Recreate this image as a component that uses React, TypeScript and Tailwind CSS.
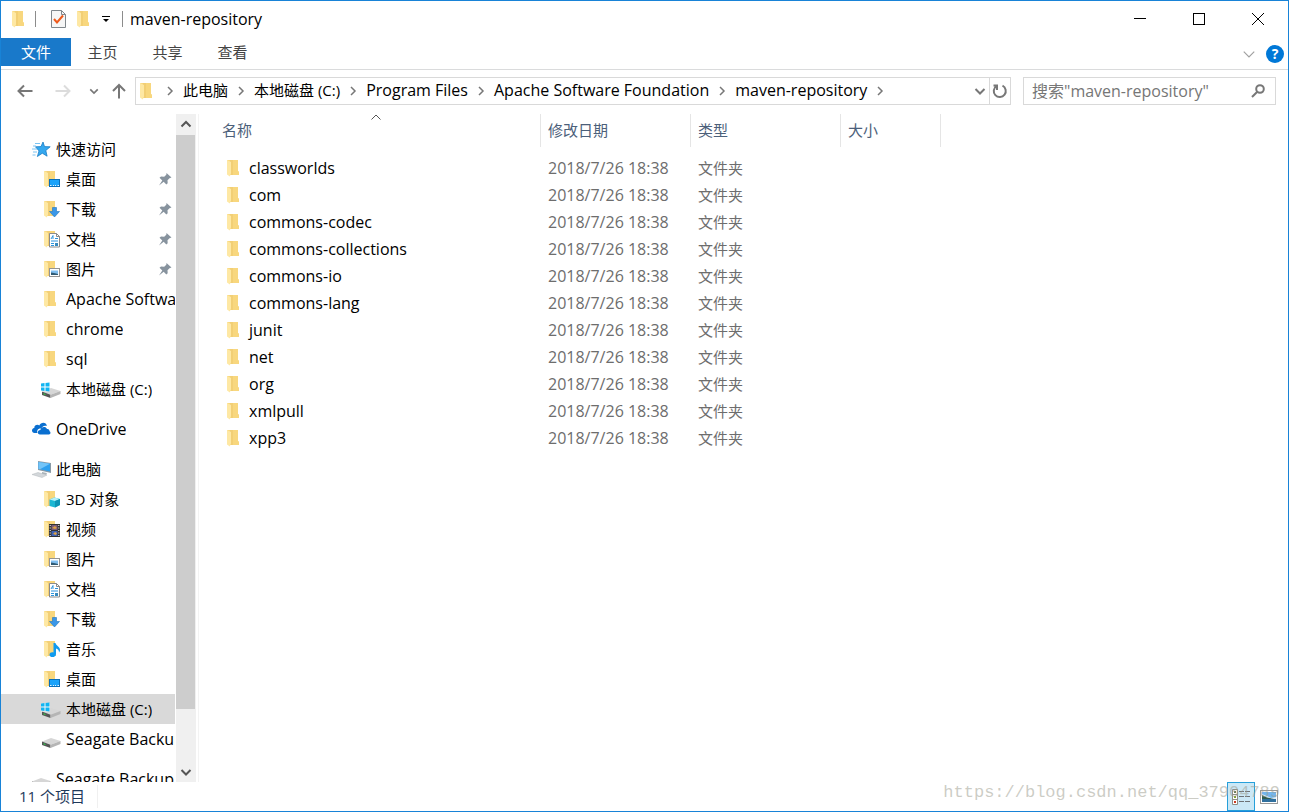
import type { ReactNode } from "react";

type IconName =
	| "star"
	| "folder"
	| "desktop"
	| "downloads"
	| "documents"
	| "pictures"
	| "objects"
	| "videos"
	| "music"
	| "system"
	| "drive"
	| "cloud"
	| "computer";

type TreeItem = { label: string; icon: IconName; pinned?: boolean; selected?: boolean };
type TreeGroup = { label: string; icon: IconName; items: TreeItem[] };

const groups: TreeGroup[] = [
	{
		label: "快速访问",
		icon: "star",
		items: [
			{ label: "桌面", icon: "desktop", pinned: true },
			{ label: "下载", icon: "downloads", pinned: true },
			{ label: "文档", icon: "documents", pinned: true },
			{ label: "图片", icon: "pictures", pinned: true },
			{ label: "Apache Software", icon: "folder" },
			{ label: "chrome", icon: "folder" },
			{ label: "sql", icon: "folder" },
			{ label: "本地磁盘 (C:)", icon: "system" },
		],
	},
	{ label: "OneDrive", icon: "cloud", items: [] },
	{
		label: "此电脑",
		icon: "computer",
		items: [
			{ label: "3D 对象", icon: "objects" },
			{ label: "视频", icon: "videos" },
			{ label: "图片", icon: "pictures" },
			{ label: "文档", icon: "documents" },
			{ label: "下载", icon: "downloads" },
			{ label: "音乐", icon: "music" },
			{ label: "桌面", icon: "desktop" },
			{ label: "本地磁盘 (C:)", icon: "system", selected: true },
			{ label: "Seagate Backup", icon: "drive" },
		],
	},
	{ label: "Seagate Backup", icon: "drive", items: [] },
];

const crumbs = [
	"此电脑",
	"本地磁盘 (C:)",
	"Program Files",
	"Apache Software Foundation",
	"maven-repository",
];

const files = [
	"classworlds",
	"com",
	"commons-codec",
	"commons-collections",
	"commons-io",
	"commons-lang",
	"junit",
	"net",
	"org",
	"xmlpull",
	"xpp3",
];

const columns = ["名称", "修改日期", "类型", "大小"];

// Latin labels are set a step larger than Chinese ones
function labelSize(label: string) {
	return /^[\x00-\x7f]+$/.test(label) ? "text-base" : "text-[15px]";
}

function Svg({ children }: { children: ReactNode }) {
	return (
		<svg viewBox="0 0 20 20" className="size-5 shrink-0" aria-hidden="true">
			{children}
		</svg>
	);
}

function FolderShape() {
	return (
		<>
			<path d="M3 2H14v11l1 .5V17H6z" fill="#f8d77e" />
			<path d="M6 2h3v15H6z" fill="#f2cf75" />
			<path d="M3 2l4 2v11.500L5.800 18.500 3 16.500z" fill="#fee8a4" />
		</>
	);
}

function DriveShape() {
	return (
		<>
			<path d="M1 12.500L10 9l9.500 3-10 3.800z" fill="#d6d6d6" />
			<path d="M1 12.500l8.500 3.300V19L1 16z" fill="#555" />
			<path d="M9.500 15.800l10-3.800v3l-10 4z" fill="#b5b5b5" />
			<path d="M2.500 14.800l2 .7" stroke="#2fd04a" strokeWidth="1.2" />
		</>
	);
}

function ItemIcon({ name }: { name: IconName }) {
	switch (name) {
		case "star":
			return (
				<Svg>
					<path
						d="M12 3l1.500 4.600 5.700.2-4.400 3.700 1.300 5.700-4.800-3-4.900 3.300 1.600-5.600L4.500 7.800l5.500-.2z"
						fill="#35a8ef"
						stroke="#1b7cc4"
						strokeWidth=".8"
					/>
					<path d="M4 4.500h5M2 7h3M1 10h5M2 13h4M1.500 16h3" stroke="#6bbcf0" strokeWidth=".9" />
				</Svg>
			);
		case "desktop":
			return (
				<Svg>
					<FolderShape />
					<rect x="8.5" y="10.5" width="10" height="7" fill="#1aa3fb" stroke="#0b6fb8" />
					<path d="M9 16.500h1.500M12 16.500h1M14 16.500h1M16.500 16.500h1.500" stroke="#e8f5ff" />
				</Svg>
			);
		case "downloads":
			return (
				<Svg>
					<FolderShape />
					<path d="M11.500 8.500h4v4h3L13.500 18l-5-5.500h3z" fill="#3a97e8" stroke="#2176bd" strokeWidth=".6" />
				</Svg>
			);
		case "documents":
			return (
				<Svg>
					<FolderShape />
					<path d="M8.500 4.500h7l3 3v10.500h-10z" fill="#fff" stroke="#8b8b8b" />
					<path d="M15.500 4.500v3h3" fill="none" stroke="#8b8b8b" />
					<path d="M10 10l2-3.500V10M14 9.500h3M10 12h7M10 14.500h3M10 16.500h3" fill="none" stroke="#2c94dd" />
					<path d="M14 14h3v3h-3z" fill="#378bc0" />
				</Svg>
			);
		case "pictures":
			return (
				<Svg>
					<FolderShape />
					<rect x="8.5" y="9.5" width="10" height="8" fill="#fff" stroke="#949494" />
					<path d="M10 11.500h7V16h-7z" fill="#81bff0" />
					<path d="M10 13.500l3 .5 4 1V16h-7z" fill="#315b73" />
				</Svg>
			);
		case "objects":
			return (
				<Svg>
					<FolderShape />
					<path d="M8.500 10.500l5-2 5.500 1.500v6l-5 2.500-5.500-1.500z" fill="#1bb7d3" />
					<path d="M8.500 10.500l5-2L19 10l-5 2z" fill="#b4f0fa" />
					<path d="M14 12l5-2v6l-5 2.500z" fill="#0d94b5" />
				</Svg>
			);
		case "videos":
			return (
				<Svg>
					<FolderShape />
					<path d="M8 5h11v13H8z" fill="#333" />
					<path d="M10.500 6h6v5h-6z" fill="#7b5c78" />
					<path d="M10.500 12h6v5h-6z" fill="#3e62b5" />
					<path d="M11 9l3-2 2 2-2 1zM12 15l2-2 2 1-1 2z" fill="#e0a142" />
					<path d="M9.200 6v12M17.800 6v12" stroke="#fff" strokeDasharray="1 1.500" />
				</Svg>
			);
		case "music":
			return (
				<Svg>
					<FolderShape />
					<path
						d="M12.500 4h2c.5 2.500 4.500 3.500 4.500 7 0 1.500-1 2.500-1 2.500.3-2.500-1.500-3.300-3-4V15c0 4-6.500 4-6.500.8 0-2 2-2.800 4-2.300z"
						fill="#0f9bf0"
					/>
				</Svg>
			);
		case "system":
			return (
				<Svg>
					<DriveShape />
					<path d="M0 4h9v8.500H0z" fill="#fff" fillOpacity=".7" />
					<path d="M0 4.500L3.500 4v3.500H0zM4.500 4L8.500 3.500v4h-4zM0 8.500h3.500V12L0 11.500zM4.500 8.500h4v4l-4-.4z" fill="#12b5f2" />
				</Svg>
			);
		case "drive":
			return (
				<Svg>
					<DriveShape />
				</Svg>
			);
		case "cloud":
			return (
				<Svg>
					<path
						d="M3.500 14C.500 14 0 9.500 3.300 9c-.2-3 3.500-4 5-2.500C10 2.500 15.500 3 15.800 7c-3-1-5 1-5.300 2.500C7 8.800 5.500 11.500 6.500 14z"
						fill="#0a6fd0"
					/>
					<path
						d="M9 15.500c-3 0-3-4.500.4-4.500.2-3.500 5.600-4.200 6.600-1 2-.3 2.700 1.500 2.500 2.300 1.500.7 1.200 3.200-.5 3.200z"
						fill="#0a6fd0"
					/>
				</Svg>
			);
		case "computer":
			return (
				<Svg>
					<path d="M7 2l13 2v10L7 11z" fill="#8a9aa6" />
					<path d="M7.500 3L19 4.800v7.700L7.500 10z" fill="#2d9fee" />
					<path d="M7.500 3L19 4.800 9 10.300l-1.500-.3z" fill="#72c4f8" />
					<path d="M11 13l5 1-1 2-4-1z" fill="#a9b2b8" />
					<path d="M1 15.500l6-2 9 2.500-5 2.500z" fill="#d3d7da" stroke="#b3b9bd" strokeWidth=".5" />
				</Svg>
			);
		default:
			return (
				<Svg>
					<FolderShape />
				</Svg>
			);
	}
}

function Pin() {
	return (
		<svg viewBox="0 0 14 14" className="size-3.5 shrink-0" aria-hidden="true">
			<path
				d="M8.500 1L13.500 5.500l-2 .8-2 1.900.2 3-1.400 1.200-2.600-2.700L1 13.500l3.300-5L1.500 5.800 3 4.500l3.200.2 2.100-2z"
				fill="#87939e"
			/>
		</svg>
	);
}

function Chevron({ direction, className }: { direction: "up" | "down" | "right"; className: string }) {
	const paths = {
		up: "M1.500 7.500L6 3l4.500 4.500",
		down: "M1.500 4L6 8.500 10.500 4",
		right: "M4 2l4 4-4 4",
	};
	return (
		<svg viewBox="0 0 12 12" className={`shrink-0 fill-none stroke-current ${className}`} aria-hidden="true">
			<path d={paths[direction]} />
		</svg>
	);
}

function TitleBar() {
	return (
		<header className="flex h-[37px] shrink-0 items-center pb-0.5 pl-2">
			<ItemIcon name="folder" />
			<span className="ml-1.5 h-4 w-px bg-[#8c8c8c]" />
			<button aria-label="属性" className="ml-3 size-5">
				<svg viewBox="0 0 20 20" className="size-5">
					<path d="M3.500 1.500h10l4 4v13h-14z" fill="#f6f6f6" stroke="#80878c" />
					<path d="M13.500 1.500v4h4" fill="none" stroke="#80878c" />
					<path d="M6 10l3 3.500 6-7" fill="none" stroke="#ee5a1c" strokeWidth="2" />
				</svg>
			</button>
			<button aria-label="新建文件夹" className="ml-1.5 size-5">
				<ItemIcon name="folder" />
			</button>
			<button aria-label="自定义快速访问工具栏" className="ml-1 p-1">
				<svg viewBox="0 0 8 8" className="size-2">
					<path d="M0 1.500h8" stroke="#000" />
					<path d="M1 4h6L4 7z" />
				</svg>
			</button>
			<span className="ml-2 h-4 w-px bg-[#8c8c8c]" />
			<h1 className="ml-[7px] text-base">maven-repository</h1>
			<div className="mr-px ml-auto flex h-full">
				<button aria-label="最小化" className="flex w-[59px] items-center justify-center">
					<span className="h-px w-3 bg-black" />
				</button>
				<button aria-label="最大化" className="flex w-[59px] items-center justify-center">
					<span className="size-3 border border-black" />
				</button>
				<button aria-label="关闭" className="flex w-[59px] items-center justify-center">
					<svg viewBox="0 0 12 12" className="size-3 stroke-black">
						<path d="M0 0l12 12M12 0L0 12" />
					</svg>
				</button>
			</div>
		</header>
	);
}

function Ribbon() {
	return (
		<nav className="flex h-8 shrink-0 items-center border-b border-[#dadbdc] text-[15px] text-[#444]">
			<button className="h-7 w-[70px] self-start bg-[#1979ca] text-white">文件</button>
			<button className="ml-[7px] w-[49px] pb-0.5">主页</button>
			<button className="ml-4 w-[49px] pb-0.5">共享</button>
			<button className="ml-4 w-[49px] pb-0.5">查看</button>
			<button aria-label="展开功能区" className="ml-auto">
				<Chevron direction="down" className="size-3.5 text-[#a0a0a0]" />
			</button>
			<button
				aria-label="帮助"
				className="mr-1 ml-2.5 size-[18px] rounded-full bg-[#0078d7] text-sm leading-[18px] font-bold text-white"
			>
				?
			</button>
		</nav>
	);
}

function AddressBar() {
	return (
		<div className="flex shrink-0 items-center pt-[7px] pr-3">
			<button aria-label="后退" className="ml-4 text-[#777]">
				<svg viewBox="0 0 16 16" className="size-4 fill-none stroke-current stroke-2">
					<path d="M15.500 8H1M7 2.500L1.500 8 7 13.500" />
				</svg>
			</button>
			<button aria-label="前进" className="ml-[22px] text-[#dcdcdc]">
				<svg viewBox="0 0 16 16" className="size-4 fill-none stroke-current stroke-2">
					<path d="M.500 8H15M9 2.500L14.500 8 9 13.500" />
				</svg>
			</button>
			<button aria-label="最近浏览的位置" className="ml-[18px] text-[#777]">
				<Chevron direction="down" className="size-2.5 stroke-2" />
			</button>
			<button aria-label="向上" className="ml-3 text-[#777]">
				<svg viewBox="0 0 16 16" className="size-4 fill-none stroke-current stroke-2">
					<path d="M8 15.500V1.500M2 8l6-6 6 6" />
				</svg>
			</button>
			<div className="ml-2 flex h-7 min-w-0 flex-1 items-center border border-[#d9d9d9]">
				<span className="ml-px">
					<ItemIcon name="folder" />
				</span>
				<Chevron direction="right" className="mx-[7px] size-3 stroke-[1.5] text-[#777]" />
				{crumbs.map((crumb) => (
					<div key={crumb} className="flex items-center">
						<button className={`pb-0.5 whitespace-nowrap ${labelSize(crumb)}`}>{crumb}</button>
						<Chevron direction="right" className="mx-[7px] size-3 stroke-[1.5] text-[#777]" />
					</div>
				))}
				<button aria-label="上一个位置" className="mr-[3px] ml-auto text-[#777]">
					<Chevron direction="down" className="size-3 stroke-2" />
				</button>
				<button
					aria-label="刷新"
					className="flex h-full w-[21px] items-center justify-center border-l border-[#d9d9d9] text-[#777]"
				>
					<svg viewBox="0 0 16 16" className="size-4 fill-none stroke-current stroke-2">
						<path d="M10.500 2.700A6 6 0 1 1 4.500 3M1.500 2.500H5V7" />
					</svg>
				</button>
			</div>
			<div className="ml-3 flex h-7 w-[253px] items-center border border-[#d9d9d9] pr-2.5 pl-2">
				<input
					type="search"
					aria-label="搜索"
					placeholder='搜索"maven-repository"'
					className="min-w-0 flex-1 bg-transparent text-base outline-none placeholder:text-[#767676]"
				/>
				<svg viewBox="0 0 14 14" className="size-3.5 fill-none stroke-[#777] stroke-2" aria-hidden="true">
					<circle cx="9" cy="5" r="3.800" />
					<path d="M6.300 7.700L1 13" />
				</svg>
			</div>
		</div>
	);
}

function TreeRow({ item, root }: { item: TreeItem; root?: boolean }) {
	return (
		<a
			href="#"
			className={`flex h-[30px] items-center gap-[5px] ${root ? "pl-[30px]" : "pl-10"} ${
				item.selected ? "bg-[#d9d9d9]" : ""
			}`}
		>
			<ItemIcon name={item.icon} />
			<span className={`min-w-0 overflow-hidden whitespace-nowrap ${labelSize(item.label)}`}>{item.label}</span>
			{item.pinned && (
				<span className="mr-[3px] ml-auto">
					<Pin />
				</span>
			)}
		</a>
	);
}

function Sidebar() {
	return (
		<aside className="flex w-[198px] shrink-0 border-r border-[#f3f3f3]">
			<nav className="flex min-w-0 flex-1 flex-col gap-2.5 overflow-hidden pt-5">
				{groups.map((group, i) => (
					<div key={i} className="shrink-0">
						<TreeRow item={group} root />
						{group.items.map((item) => (
							<TreeRow key={item.label} item={item} />
						))}
					</div>
				))}
			</nav>
			<div className="mr-0.5 ml-px flex w-5 flex-col bg-[#f0f0f0] text-[#555]">
				<button aria-label="向上滚动" className="mr-px flex h-[21px] shrink-0 items-center justify-center">
					<Chevron direction="up" className="size-3 stroke-2" />
				</button>
				<div className="mr-px flex-1">
					<div className="h-11/12 bg-[#cdcdcd]" />
				</div>
				<button aria-label="向下滚动" className="mr-px flex h-[21px] shrink-0 items-center justify-center">
					<Chevron direction="down" className="size-3 stroke-2" />
				</button>
			</div>
		</aside>
	);
}

function FileList() {
	return (
		<main className="min-w-0 flex-1 overflow-hidden pl-[13px]">
			<table className="w-[729px] table-fixed border-separate border-spacing-0 text-left text-[15px]">
				<colgroup>
					<col className="w-[329px]" />
					<col className="w-[150px]" />
					<col className="w-[150px]" />
					<col className="w-[100px]" />
				</colgroup>
				<thead>
					<tr>
						{columns.map((column, i) => (
							<th key={column} className="p-0 pb-2 font-normal text-[#4c607a]">
								<div
									className={`relative flex h-[33px] items-center border-r border-[#e5e5e5] ${
										i === 0 ? "pl-2.5" : "pl-[7px]"
									}`}
								>
									{column}
									{i === 0 && (
										<Chevron
											direction="up"
											className="absolute -top-0.5 left-1/2 size-3 -translate-x-1/2 text-[#555]"
										/>
									)}
								</div>
							</th>
						))}
					</tr>
				</thead>
				<tbody>
					{files.map((name) => (
						<tr key={name} className="h-[27px] text-[#6d6d6d]">
							<td className="p-0 pl-3">
								<div className="flex items-center gap-[5px] text-base leading-[27px] text-black">
									<span className="pb-0.5">
										<ItemIcon name="folder" />
									</span>
									{name}
								</div>
							</td>
							<td className="p-0 pl-[7px] text-base leading-[27px]">2018/7/26 18:38</td>
							<td className="p-0 pl-[7px]">文件夹</td>
							<td className="p-0" />
						</tr>
					))}
				</tbody>
			</table>
		</main>
	);
}

function StatusBar() {
	return (
		<footer className="relative flex h-[29px] shrink-0 items-center pl-[18px] text-[15px] text-[#1e395b]">
			<span className="border-r border-[#f0f0f0] pr-3">11 个项目</span>
			<div className="mr-2.5 ml-auto flex h-full items-center">
				<button
					aria-label="详细信息"
					className="flex h-full w-7 items-center justify-center border border-[#26a0da] bg-[#cbe8f6]"
				>
					<svg viewBox="0 0 18 16" className="h-4 w-[18px]">
						<path d="M.500.500h5v15h-5zM.500 5.500h5M.500 10.500h5" fill="#fff" stroke="#8e8e86" />
						<path d="M2 2h2v2H2z" fill="#697d5c" />
						<path d="M2 7h2v2H2z" fill="#7fa32c" />
						<path d="M2 12h2v2H2z" fill="#cc3b22" />
						<path d="M7 2.500h5M13 2.500h5M7 7.500h5M13 7.500h5M7 12.500h5M13 12.500h5" stroke="#6d7276" />
					</svg>
				</button>
				<button aria-label="大缩略图" className="ml-[5px]">
					<svg viewBox="0 0 18 14" className="h-3.5 w-[18px]">
						<rect x=".5" y=".5" width="17" height="13" fill="#fff" stroke="#989898" />
						<path d="M2 2h14v10H2z" fill="#73b6ee" />
						<path d="M2 4l5 2 4 2 5-1v2H2z" fill="#dcecf6" />
						<path d="M2 5l5 2.500L14 9H2z" fill="#315d4f" />
						<path d="M2 9h14v3H2z" fill="#30709e" />
					</svg>
				</button>
			</div>
			<span className="pointer-events-none absolute right-2 bottom-1.5 font-['Liberation_Mono',monospace] text-[17px] text-[#9a9a8c]/50">
				https://blog.csdn.net/qq_37904789
			</span>
		</footer>
	);
}

export default function App() {
	return (
		<div className="flex h-screen flex-col overflow-hidden border border-[#1883d7] bg-white font-['Open_Sans','Noto_Sans_CJK_SC',sans-serif] text-black">
			<TitleBar />
			<Ribbon />
			<AddressBar />
			<div className="flex min-h-0 flex-1 pt-[9px]">
				<Sidebar />
				<FileList />
			</div>
			<StatusBar />
		</div>
	);
}
